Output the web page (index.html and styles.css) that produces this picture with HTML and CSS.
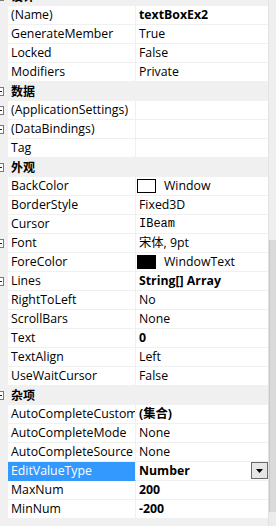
FILE: index.html
```html
<!DOCTYPE html>
<html>
<head>
<meta charset="utf-8">
<link rel="stylesheet" href="styles.css">
</head>
<body>
<div class="pg">
  <div class="grid">
    <div class="row cat"><span class="gut"><svg class="tog" viewBox="0 0 9 9"><rect x="0.5" y="0.5" width="8" height="8"/><path d="M2 4.5h5"/></svg></span><span class="ctext">设计</span></div>
    <div class="row"><span class="gut"></span><span class="name">(Name)</span><span class="val b">textBoxEx2</span></div>
    <div class="row"><span class="gut"></span><span class="name">GenerateMember</span><span class="val">True</span></div>
    <div class="row"><span class="gut"></span><span class="name">Locked</span><span class="val">False</span></div>
    <div class="row"><span class="gut"></span><span class="name">Modifiers</span><span class="val">Private</span></div>
    <div class="row cat"><span class="gut"><svg class="tog" viewBox="0 0 9 9"><rect x="0.5" y="0.5" width="8" height="8"/><path d="M2 4.5h5"/></svg></span><span class="ctext">数据</span></div>
    <div class="row"><span class="gut"><svg class="tog" viewBox="0 0 9 9"><rect x="0.5" y="0.5" width="8" height="8"/><path d="M2 4.5h5M4.5 2v5"/></svg></span><span class="name">(ApplicationSettings)</span><span class="val"></span></div>
    <div class="row"><span class="gut"><svg class="tog" viewBox="0 0 9 9"><rect x="0.5" y="0.5" width="8" height="8"/><path d="M2 4.5h5M4.5 2v5"/></svg></span><span class="name">(DataBindings)</span><span class="val"></span></div>
    <div class="row"><span class="gut"></span><span class="name">Tag</span><span class="val"></span></div>
    <div class="row cat"><span class="gut"><svg class="tog" viewBox="0 0 9 9"><rect x="0.5" y="0.5" width="8" height="8"/><path d="M2 4.5h5"/></svg></span><span class="ctext">外观</span></div>
    <div class="row"><span class="gut"></span><span class="name">BackColor</span><span class="val"><i class="sw white"></i>Window</span></div>
    <div class="row"><span class="gut"></span><span class="name">BorderStyle</span><span class="val">Fixed3D</span></div>
    <div class="row"><span class="gut"></span><span class="name">Cursor</span><span class="val mono">IBeam</span></div>
    <div class="row"><span class="gut"><svg class="tog" viewBox="0 0 9 9"><rect x="0.5" y="0.5" width="8" height="8"/><path d="M2 4.5h5M4.5 2v5"/></svg></span><span class="name">Font</span><span class="val">宋体, 9pt</span></div>
    <div class="row"><span class="gut"></span><span class="name">ForeColor</span><span class="val"><i class="sw black"></i>WindowText</span></div>
    <div class="row"><span class="gut"><svg class="tog" viewBox="0 0 9 9"><rect x="0.5" y="0.5" width="8" height="8"/><path d="M2 4.5h5M4.5 2v5"/></svg></span><span class="name">Lines</span><span class="val b">String[] Array</span></div>
    <div class="row"><span class="gut"></span><span class="name">RightToLeft</span><span class="val">No</span></div>
    <div class="row"><span class="gut"></span><span class="name">ScrollBars</span><span class="val">None</span></div>
    <div class="row"><span class="gut"></span><span class="name">Text</span><span class="val b">0</span></div>
    <div class="row"><span class="gut"></span><span class="name">TextAlign</span><span class="val">Left</span></div>
    <div class="row"><span class="gut"></span><span class="name">UseWaitCursor</span><span class="val">False</span></div>
    <div class="row cat"><span class="gut"><svg class="tog" viewBox="0 0 9 9"><rect x="0.5" y="0.5" width="8" height="8"/><path d="M2 4.5h5"/></svg></span><span class="ctext">杂项</span></div>
    <div class="row"><span class="gut"></span><span class="name">AutoCompleteCustomSource</span><span class="val b">(集合)</span></div>
    <div class="row"><span class="gut"></span><span class="name">AutoCompleteMode</span><span class="val">None</span></div>
    <div class="row"><span class="gut"></span><span class="name">AutoCompleteSource</span><span class="val">None</span></div>
    <div class="row sel"><span class="gut"></span><span class="name">EditValueType</span><span class="val b">Number<span class="dd"><svg viewBox="0 0 7 4"><path d="M0 0h7L3.5 4z"/></svg></span></span></div>
    <div class="row"><span class="gut"></span><span class="name">MaxNum</span><span class="val b">200</span></div>
    <div class="row"><span class="gut"></span><span class="name">MinNum</span><span class="val b">-200</span></div>
  </div>
  <div class="sb"><div class="track"></div><div class="thumb"></div></div>
</div>
</body>
</html>
```
FILE: styles.css
```css
html, body {
  margin: 0;
  padding: 0;
  background: #f0f0f0;
  overflow: hidden;
}
.pg {
  display: flex;
  width: 276px;
  height: 526px;
  overflow: hidden;
  font-family: "Open Sans", "Noto Sans CJK SC", sans-serif;
  font-size: 12.3px;
  color: #000;
}
.grid {
  flex: 1;
  margin-top: -13px;
  min-width: 0;
}
.row {
  display: flex;
  height: 19px;
  line-height: 18px;
}
.gut {
  width: 8px;
  flex: none;
  display: flex;
  align-items: center;
  overflow: hidden;
  background: #f0f0f0;
}
.tog {
  width: 9px;
  height: 9px;
  flex: none;
  margin-left: -5px;
  fill: #fff;
  stroke: #7a7a7a;
  stroke-width: 1;
}
.tog path {
  stroke: #222;
}
.cat {
  background: #f0f0f0;
  font-weight: bold;
}
.ctext {
  padding-left: 3px;
  font-family: "Noto Sans CJK SC", sans-serif;
  font-size: 12px;
}
.name {
  width: 124px;
  flex: none;
  padding-left: 3px;
  background: #fff;
  border-bottom: 1px solid #f0f0f0;
  border-right: 1px solid #f0f0f0;
  white-space: nowrap;
  overflow: hidden;
  text-overflow: clip;
}
.val {
  flex: 1;
  min-width: 0;
  display: flex;
  align-items: center;
  height: 18px;
  padding-left: 3px;
  background: #fff;
  border-bottom: 1px solid #f0f0f0;
  white-space: nowrap;
}
.b {
  font-weight: bold;
}
.mono {
  font-family: "Liberation Mono", "Noto Sans CJK SC", monospace;
  font-size: 12px;
}
.sw {
  width: 17px;
  height: 12px;
  margin-left: -2px;
  margin-right: 8px;
  border: 1px solid #000;
  flex: none;
}
.sw.white { background: #fff; }
.sw.black { background: #000; }
.sel .name {
  background: #3399ff;
  color: #fff;
  border-bottom-color: #3399ff;
}
.dd {
  margin-left: auto;
  width: 15px;
  height: 15px;
  align-self: flex-start;
  border: 1px solid #6a6a6a;
  background: #e6e6e6;
  display: flex;
  align-items: center;
  justify-content: center;
}
.dd svg {
  width: 7px;
  height: 4px;
  fill: #000;
}
.sb {
  width: 7px;
  flex: none;
  display: flex;
  flex-direction: column;
  border-left: 1px solid #e2e2e2;
  background: #ececec;
}
.track {
  height: 240px;
  background: #efefef;
}
.thumb {
  height: 272px;
  background: #dadada;
  border-left: 1px solid #c8c8c8;
}
```
